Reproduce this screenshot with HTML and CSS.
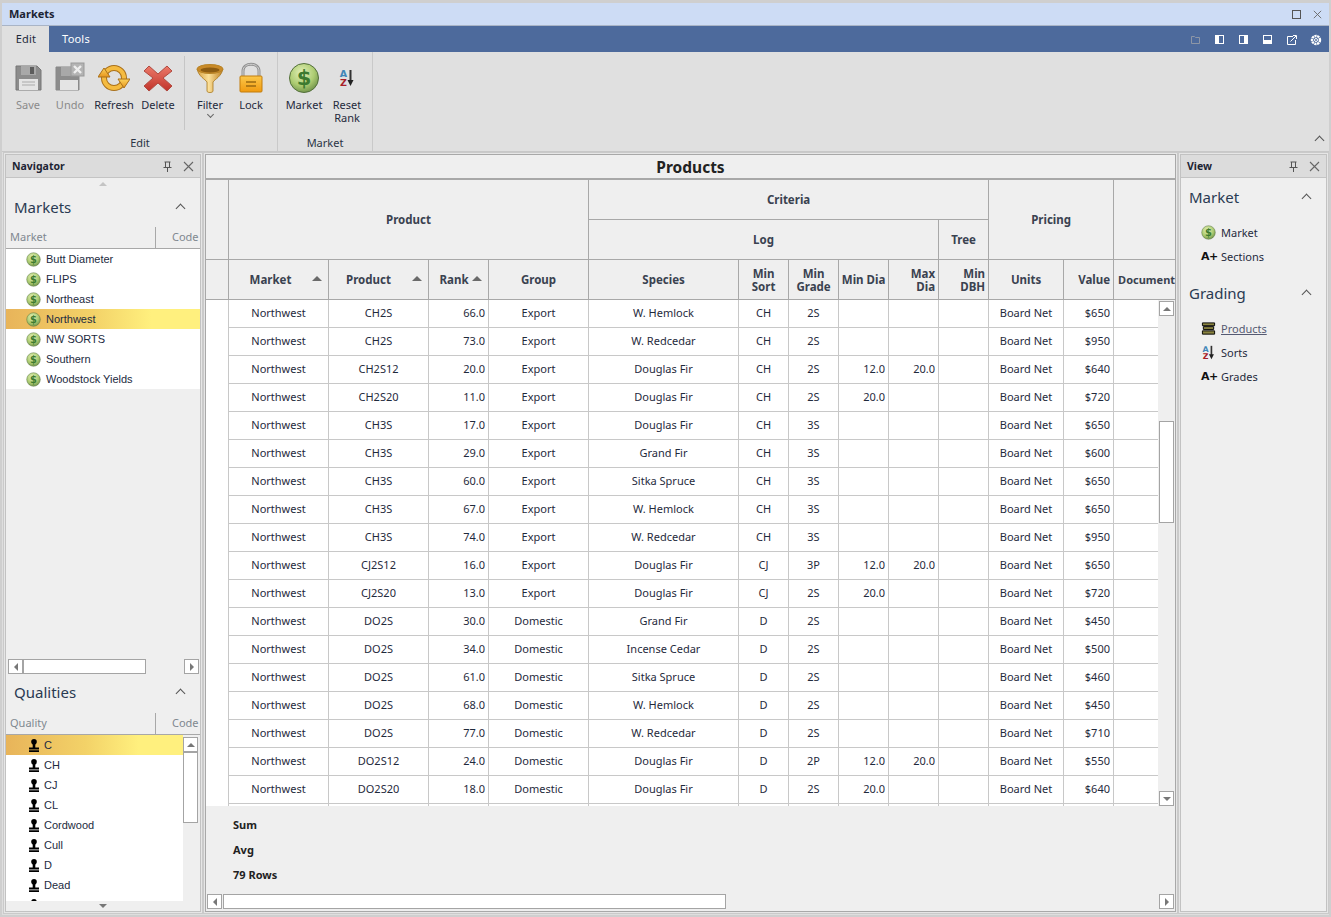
FILE: index.html
```html
<!DOCTYPE html>
<html>
<head>
  <title>Markets</title>
  <meta charset="UTF-8">
  <link rel="stylesheet" href="styles.css">
</head>
<body>
  <svg class="defs" width="0" height="0">
    <defs>
      <radialGradient id="coinFill" cx="42%" cy="32%" r="72%">
        <stop offset="0" stop-color="#e2f0b8"/><stop offset="0.6" stop-color="#adcc72"/><stop offset="1" stop-color="#6d9048"/>
      </radialGradient>
      <linearGradient id="funnelFill" x1="0" x2="1" y1="0" y2="0">
        <stop offset="0" stop-color="#d8a040"/><stop offset="0.45" stop-color="#fbe09a"/><stop offset="1" stop-color="#c07f20"/>
      </linearGradient>
      <linearGradient id="lockFill" x1="0" x2="0" y1="0" y2="1">
        <stop offset="0" stop-color="#fcc84a"/><stop offset="1" stop-color="#f09a10"/>
      </linearGradient>
      <linearGradient id="arrowFill" x1="0" x2="0" y1="0" y2="1">
        <stop offset="0" stop-color="#fbd35c"/><stop offset="1" stop-color="#e8951c"/>
      </linearGradient>
      <linearGradient id="redFill" x1="0" x2="0" y1="0" y2="1">
        <stop offset="0" stop-color="#ec7a6a"/><stop offset="1" stop-color="#c0332a"/>
      </linearGradient>
      <symbol id="coin" viewBox="0 0 32 32">
        <circle cx="16" cy="16" r="14.5" fill="url(#coinFill)" stroke="#54703c" stroke-width="1"/>
        <text x="16" y="23" text-anchor="middle" class="coin-text">$</text>
      </symbol>
      <symbol id="floppy" viewBox="0 0 32 32">
        <path d="M4 4h21l4 4v20H4z" fill="#8c8c8c" stroke="#777" stroke-linejoin="round"/>
        <rect x="9" y="4" width="15" height="9" fill="#a8a8a8"/>
        <rect x="18" y="5" width="4" height="7" fill="#5c5c5c"/>
        <rect x="7" y="17" width="19" height="11" fill="#e4e4e4"/>
        <path d="M10 20h13M10 23h13" stroke="#aaa"/>
      </symbol>
      <symbol id="floppyx" viewBox="0 0 32 32">
        <path d="M2 5h23v23H2z" fill="#8c8c8c" stroke="#888"/>
        <rect x="7" y="5" width="11" height="9" fill="#a8a8a8"/>
        <rect x="6" y="18" width="18" height="10" fill="#e4e4e4"/>
        <rect x="17" y="1" width="13" height="13" fill="#b4b4b4" stroke="#999"/>
        <path d="M20 4l7 7M27 4l-7 7" stroke="#eee" stroke-width="2.4"/>
      </symbol>
      <symbol id="refresh" viewBox="0 0 32 32">
        <circle cx="16" cy="16" r="10" fill="none" stroke="#a9701a" stroke-width="6"/>
        <circle cx="16" cy="16" r="10" fill="none" stroke="#f5bb40" stroke-width="4"/>
        <path d="M0 15l6-9 6 9z" fill="url(#arrowFill)" stroke="#a9701a" stroke-linejoin="round"/>
        <path d="M20 17h12l-6 9z" fill="url(#arrowFill)" stroke="#a9701a" stroke-linejoin="round"/>
      </symbol>
      <symbol id="delete" viewBox="0 0 32 32">
        <path d="M7 4l9 8 9-8 5 5-9 7 9 8-5 5-9-8-9 8-5-5 9-8-9-7z" fill="url(#redFill)" stroke="#b04a40" stroke-linejoin="round"/>
      </symbol>
      <symbol id="funnel" viewBox="0 0 32 32">
        <path d="M3 7c2 8 8 10 10 13v9c0 2 6 2 6 0v-9c2-3 8-5 10-13z" fill="url(#funnelFill)" stroke="#a87820" stroke-width="0.8"/>
        <ellipse cx="16" cy="7" rx="13" ry="4.5" fill="#c98a28" stroke="#b88428"/>
        <ellipse cx="16" cy="8" rx="9.5" ry="2.6" fill="#8d5c12"/>
      </symbol>
      <symbol id="lock" viewBox="0 0 32 32">
        <path d="M8 15V9c0-9 16-9 16 0v6" fill="none" stroke="#8f8f8f" stroke-width="3"/>
        <path d="M8 15V9c0-9 16-9 16 0v6" fill="none" stroke="#d4d4d4" stroke-width="1"/>
        <rect x="5" y="14" width="22" height="16" rx="1" fill="url(#lockFill)" stroke="#c27c0c"/>
        <path d="M11 20h10M11 24h10" stroke="#9a6a10" stroke-width="1.6"/>
      </symbol>
      <symbol id="sortaz" viewBox="0 0 16 18">
        <text x="4.5" y="8" text-anchor="middle" class="az az-a">A</text>
        <text x="4.5" y="17" text-anchor="middle" class="az az-z">Z</text>
        <path d="M11.5 1v11" stroke="#333" stroke-width="2"/>
        <path d="M8.5 11h6l-3 6z" fill="#222"/>
      </symbol>
      <symbol id="stamp" viewBox="0 0 12 13">
        <circle cx="6" cy="2.800" r="2.800" fill="#000"/>
        <path d="M4.700 4h2.600v5H4.700z" fill="#000"/>
        <path d="M1 8.500h10v2H1zM1 11.300h10V13H1z" fill="#000"/>
      </symbol>
      <symbol id="stack" viewBox="0 0 16 14">
        <path d="M1.500 1h13v3h-13zM2.500 5h11v3h-11zM1.500 9.500h13v3.500h-13z" fill="#8a8440" stroke="#000"/>
      </symbol>
      <symbol id="pin" viewBox="0 0 11 11">
        <path d="M2.500 1h6M3.500 1v5M7.500 1v5M1.500 6.500h8M5.500 7v4" fill="none" stroke="#555"/>
      </symbol>
      <symbol id="close" viewBox="0 0 11 11">
        <path d="M1 1l9 9M10 1l-9 9" fill="none" stroke="#666" stroke-width="1.100"/>
      </symbol>
    </defs>
  </svg>

  <div class="window">
    <div class="titlebar">
      <span class="titlebar-text">Markets</span>
      <span class="win-max"></span>
      <svg class="win-close"><use href="#close"/></svg>
    </div>

    <div class="tabbar">
      <div class="tab tab-active">Edit</div>
      <div class="tab">Tools</div>
      <div class="tab-icons">
        <svg class="ti ti-folder" viewBox="0 0 9 9"><path d="M0.500 1.500h3l1 1h4v6h-8z" fill="none" stroke="#8d96a6"/></svg>
        <span class="ti-panel ti-left"></span>
        <span class="ti-panel ti-right"></span>
        <span class="ti-panel ti-bottom"></span>
        <svg class="ti ti-pop" viewBox="0 0 10 10"><path d="M6 1.500H0.500v8h8V5" fill="none" stroke="#fff"/><path d="M3.500 6.500L9 1M6 0.500h3.500V4" fill="none" stroke="#fff"/></svg>
        <svg class="ti ti-gear" viewBox="0 0 12 12"><circle cx="6" cy="6" r="4" fill="none" stroke="#fff" stroke-width="2.400" stroke-dasharray="2.200 0.600"/><circle cx="6" cy="6" r="1.500" fill="none" stroke="#fff"/></svg>
      </div>
    </div>

    <div class="ribbon">
      <div class="rb-group rb-group-edit">
        <div class="rb-items">
          <div class="rb-btn rb-w42 is-off"><svg class="rb-ico"><use href="#floppy"/></svg><span>Save</span></div>
          <div class="rb-btn rb-w42 is-off"><svg class="rb-ico"><use href="#floppyx"/></svg><span>Undo</span></div>
          <div class="rb-btn rb-w46"><svg class="rb-ico"><use href="#refresh"/></svg><span>Refresh</span></div>
          <div class="rb-btn rb-w42"><svg class="rb-ico"><use href="#delete"/></svg><span>Delete</span></div>
          <div class="rb-sep"></div>
          <div class="rb-btn rb-w44"><svg class="rb-ico"><use href="#funnel"/></svg><span>Filter</span><i class="rb-chev"></i></div>
          <div class="rb-btn rb-w38"><svg class="rb-ico"><use href="#lock"/></svg><span>Lock</span></div>
        </div>
        <div class="rb-label">Edit</div>
      </div>
      <div class="rb-group rb-group-market">
        <div class="rb-items">
          <div class="rb-btn rb-w42"><svg class="rb-ico"><use href="#coin"/></svg><span>Market</span></div>
          <div class="rb-btn rb-w44"><svg class="rb-ico rb-ico-az"><use href="#sortaz"/></svg><span>Reset<br>Rank</span></div>
        </div>
        <div class="rb-label">Market</div>
      </div>
      <i class="chev rb-collapse"></i>
    </div>

    <div class="main">
      <div class="pane pane-nav">
        <div class="pane-in">
          <div class="pane-head"><b>Navigator</b><svg class="ph-pin"><use href="#pin"/></svg><svg class="ph-close"><use href="#close"/></svg></div>
          <div class="nav-up"><i class="tri tri-up tri-light"></i></div>
          <div class="sec-title sec-markets"><span>Markets</span><i class="chev"></i></div>
          <div class="col-head"><span class="ch-name">Market</span><span class="ch-code">Code</span></div>
          <ul class="list">
            <li><svg class="li-ico"><use href="#coin"/></svg>Butt Diameter</li>
            <li><svg class="li-ico"><use href="#coin"/></svg>FLIPS</li>
            <li><svg class="li-ico"><use href="#coin"/></svg>Northeast</li>
            <li class="sel"><svg class="li-ico"><use href="#coin"/></svg>Northwest</li>
            <li><svg class="li-ico"><use href="#coin"/></svg>NW SORTS</li>
            <li><svg class="li-ico"><use href="#coin"/></svg>Southern</li>
            <li><svg class="li-ico"><use href="#coin"/></svg>Woodstock Yields</li>
          </ul>
          <div class="nav-fill"></div>
          <div class="hscroll hscroll-nav">
            <div class="sb-btn"><i class="tri tri-left"></i></div>
            <div class="sb-thumb sb-thumb-nav"></div>
            <div class="sb-gap"></div>
            <div class="sb-btn"><i class="tri tri-right"></i></div>
          </div>
          <div class="sec-title sec-qual"><span>Qualities</span><i class="chev"></i></div>
          <div class="col-head"><span class="ch-name">Quality</span><span class="ch-code">Code</span></div>
          <div class="qual-body">
            <ul class="list list-qual">
              <li class="sel"><svg class="li-stamp"><use href="#stamp"/></svg>C</li>
              <li><svg class="li-stamp"><use href="#stamp"/></svg>CH</li>
              <li><svg class="li-stamp"><use href="#stamp"/></svg>CJ</li>
              <li><svg class="li-stamp"><use href="#stamp"/></svg>CL</li>
              <li><svg class="li-stamp"><use href="#stamp"/></svg>Cordwood</li>
              <li><svg class="li-stamp"><use href="#stamp"/></svg>Cull</li>
              <li><svg class="li-stamp"><use href="#stamp"/></svg>D</li>
              <li><svg class="li-stamp"><use href="#stamp"/></svg>Dead</li>
              <li><svg class="li-stamp"><use href="#stamp"/></svg>D</li>
            </ul>
            <div class="vscroll vscroll-qual">
              <div class="sb-btn"><i class="tri tri-up"></i></div>
              <div class="sb-thumb sb-thumb-qual"></div>
            </div>
          </div>
          <div class="nav-down"><i class="tri tri-down"></i></div>
        </div>
      </div>

      <div class="pane pane-center">
        <div class="pane-in">
          <div class="grid-title">Products</div>
          <div class="grid-head">
            <table class="grid">
              <colgroup><col class="c-rh"><col class="c-100"><col class="c-100"><col class="c-60"><col class="c-100"><col class="c-150"><col class="c-50"><col class="c-50"><col class="c-50"><col class="c-50"><col class="c-50"><col class="c-75"><col class="c-50"><col class="c-62"></colgroup>
              <tr>
                <th rowspan="2"></th>
                <th colspan="4" rowspan="2">Product</th>
                <th colspan="6">Criteria</th>
                <th colspan="2" rowspan="2">Pricing</th>
                <th rowspan="2" class="no-right"></th>
              </tr>
              <tr>
                <th colspan="5">Log</th>
                <th>Tree</th>
              </tr>
              <tr>
                <th></th>
                <th class="sorted pad-16">Market</th>
                <th class="sorted pad-20">Product</th>
                <th class="sorted pad-9">Rank</th>
                <th>Group</th>
                <th>Species</th>
                <th>Min<br>Sort</th>
                <th>Min<br>Grade</th>
                <th>Min Dia</th>
                <th class="right">Max<br>Dia</th>
                <th class="right">Min<br>DBH</th>
                <th>Units</th>
                <th class="right">Value</th>
                <th class="no-right doc">Document</th>
              </tr>
            </table>
          </div>
          <div class="grid-mid">
            <div class="grid-body">
              <table class="grid">
                <colgroup><col class="c-rh"><col class="c-100"><col class="c-100"><col class="c-60"><col class="c-100"><col class="c-150"><col class="c-50"><col class="c-50"><col class="c-50"><col class="c-50"><col class="c-50"><col class="c-75"><col class="c-50"><col class="c-62"></colgroup>
                <tr><td></td><td>Northwest</td><td>CH2S</td><td class="num">66.0</td><td>Export</td><td>W. Hemlock</td><td>CH</td><td>2S</td><td></td><td></td><td></td><td>Board Net</td><td class="num">$650</td><td></td></tr>
                <tr><td></td><td>Northwest</td><td>CH2S</td><td class="num">73.0</td><td>Export</td><td>W. Redcedar</td><td>CH</td><td>2S</td><td></td><td></td><td></td><td>Board Net</td><td class="num">$950</td><td></td></tr>
                <tr><td></td><td>Northwest</td><td>CH2S12</td><td class="num">20.0</td><td>Export</td><td>Douglas Fir</td><td>CH</td><td>2S</td><td class="num">12.0</td><td class="num">20.0</td><td></td><td>Board Net</td><td class="num">$640</td><td></td></tr>
                <tr><td></td><td>Northwest</td><td>CH2S20</td><td class="num">11.0</td><td>Export</td><td>Douglas Fir</td><td>CH</td><td>2S</td><td class="num">20.0</td><td></td><td></td><td>Board Net</td><td class="num">$720</td><td></td></tr>
                <tr><td></td><td>Northwest</td><td>CH3S</td><td class="num">17.0</td><td>Export</td><td>Douglas Fir</td><td>CH</td><td>3S</td><td></td><td></td><td></td><td>Board Net</td><td class="num">$650</td><td></td></tr>
                <tr><td></td><td>Northwest</td><td>CH3S</td><td class="num">29.0</td><td>Export</td><td>Grand Fir</td><td>CH</td><td>3S</td><td></td><td></td><td></td><td>Board Net</td><td class="num">$600</td><td></td></tr>
                <tr><td></td><td>Northwest</td><td>CH3S</td><td class="num">60.0</td><td>Export</td><td>Sitka Spruce</td><td>CH</td><td>3S</td><td></td><td></td><td></td><td>Board Net</td><td class="num">$650</td><td></td></tr>
                <tr><td></td><td>Northwest</td><td>CH3S</td><td class="num">67.0</td><td>Export</td><td>W. Hemlock</td><td>CH</td><td>3S</td><td></td><td></td><td></td><td>Board Net</td><td class="num">$650</td><td></td></tr>
                <tr><td></td><td>Northwest</td><td>CH3S</td><td class="num">74.0</td><td>Export</td><td>W. Redcedar</td><td>CH</td><td>3S</td><td></td><td></td><td></td><td>Board Net</td><td class="num">$950</td><td></td></tr>
                <tr><td></td><td>Northwest</td><td>CJ2S12</td><td class="num">16.0</td><td>Export</td><td>Douglas Fir</td><td>CJ</td><td>3P</td><td class="num">12.0</td><td class="num">20.0</td><td></td><td>Board Net</td><td class="num">$650</td><td></td></tr>
                <tr><td></td><td>Northwest</td><td>CJ2S20</td><td class="num">13.0</td><td>Export</td><td>Douglas Fir</td><td>CJ</td><td>2S</td><td class="num">20.0</td><td></td><td></td><td>Board Net</td><td class="num">$720</td><td></td></tr>
                <tr><td></td><td>Northwest</td><td>DO2S</td><td class="num">30.0</td><td>Domestic</td><td>Grand Fir</td><td>D</td><td>2S</td><td></td><td></td><td></td><td>Board Net</td><td class="num">$450</td><td></td></tr>
                <tr><td></td><td>Northwest</td><td>DO2S</td><td class="num">34.0</td><td>Domestic</td><td>Incense Cedar</td><td>D</td><td>2S</td><td></td><td></td><td></td><td>Board Net</td><td class="num">$500</td><td></td></tr>
                <tr><td></td><td>Northwest</td><td>DO2S</td><td class="num">61.0</td><td>Domestic</td><td>Sitka Spruce</td><td>D</td><td>2S</td><td></td><td></td><td></td><td>Board Net</td><td class="num">$460</td><td></td></tr>
                <tr><td></td><td>Northwest</td><td>DO2S</td><td class="num">68.0</td><td>Domestic</td><td>W. Hemlock</td><td>D</td><td>2S</td><td></td><td></td><td></td><td>Board Net</td><td class="num">$450</td><td></td></tr>
                <tr><td></td><td>Northwest</td><td>DO2S</td><td class="num">77.0</td><td>Domestic</td><td>W. Redcedar</td><td>D</td><td>2S</td><td></td><td></td><td></td><td>Board Net</td><td class="num">$710</td><td></td></tr>
                <tr><td></td><td>Northwest</td><td>DO2S12</td><td class="num">24.0</td><td>Domestic</td><td>Douglas Fir</td><td>D</td><td>2P</td><td class="num">12.0</td><td class="num">20.0</td><td></td><td>Board Net</td><td class="num">$550</td><td></td></tr>
                <tr><td></td><td>Northwest</td><td>DO2S20</td><td class="num">18.0</td><td>Domestic</td><td>Douglas Fir</td><td>D</td><td>2S</td><td class="num">20.0</td><td></td><td></td><td>Board Net</td><td class="num">$640</td><td></td></tr>
                <tr><td></td><td></td><td></td><td></td><td></td><td></td><td></td><td></td><td></td><td></td><td></td><td></td><td></td><td></td></tr>
              </table>
            </div>
            <div class="vscroll vscroll-grid">
              <div class="sb-btn"><i class="tri tri-up"></i></div>
              <div class="sb-gap sb-gap-top"></div>
              <div class="sb-thumb sb-thumb-grid"></div>
              <div class="sb-gap"></div>
              <div class="sb-btn"><i class="tri tri-down"></i></div>
            </div>
          </div>
          <div class="grid-foot">
            <div>Sum</div>
            <div>Avg</div>
            <div>79 Rows</div>
          </div>
          <div class="hscroll hscroll-grid">
            <div class="sb-btn"><i class="tri tri-left"></i></div>
            <div class="sb-thumb sb-thumb-hgrid"></div>
            <div class="sb-gap"></div>
            <div class="sb-btn"><i class="tri tri-right"></i></div>
          </div>
        </div>
      </div>

      <div class="pane pane-view">
        <div class="pane-in">
          <div class="pane-head"><b>View</b><svg class="ph-pin"><use href="#pin"/></svg><svg class="ph-close"><use href="#close"/></svg></div>
          <div class="sec-title view-title"><span>Market</span><i class="chev"></i></div>
          <div class="view-item"><svg class="vi-ico"><use href="#coin"/></svg>Market</div>
          <div class="view-item"><span class="aplus">A+</span>Sections</div>
          <div class="sec-title view-title view-title-2"><span>Grading</span><i class="chev"></i></div>
          <div class="view-item"><svg class="vi-ico vi-stack"><use href="#stack"/></svg><u>Products</u></div>
          <div class="view-item"><svg class="vi-ico"><use href="#sortaz"/></svg>Sorts</div>
          <div class="view-item"><span class="aplus">A+</span>Grades</div>
        </div>
      </div>
    </div>
  </div>
</body>
</html>
```

FILE: styles.css
```css
* {
  margin: 0;
  padding: 0;
  box-sizing: border-box;
}

html, body {
  height: 100%;
  overflow: hidden;
}

body {
  font-family: "Noto Sans", "Liberation Sans", sans-serif;
  font-size: 11px;
  color: #1f2a3c;
  background: #dedede;
}

.defs {
  position: absolute;
}

.coin-text {
  font-family: "DejaVu Sans", sans-serif;
  font-size: 21px;
  font-weight: 700;
  fill: #3d7a30;
}

.az {
  font-family: "DejaVu Sans", sans-serif;
  font-size: 9.5px;
  font-weight: 700;
}

.az-a { fill: #3f86b8; }
.az-z { fill: #a82028; }

.window {
  width: 1331px;
  height: 917px;
  display: flex;
  flex-direction: column;
  border: solid #cfcfcf;
  border-width: 3px 2px 2px 2px;
}

/* title bar */
.titlebar {
  height: 23px;
  flex: none;
  display: flex;
  align-items: center;
  background: #cddcf5;
  border-bottom: 1px solid #a9b4c6;
  padding-left: 7px;
}

.titlebar-text {
  flex: 1;
  font-weight: 700;
  font-size: 11px;
  line-height: 20px;
  color: #1c2433;
}

.win-max {
  width: 9px;
  height: 9px;
  border: 1px solid #555;
  margin-right: 12px;
}

.win-close {
  width: 9px;
  height: 9px;
  margin-right: 7px;
}

/* tabs */
.tabbar {
  height: 26px;
  flex: none;
  display: flex;
  background: #4d6a9c;
}

.tab {
  width: 54px;
  line-height: 26px;
  text-align: center;
  color: #fff;
  font-size: 11px;
  letter-spacing: 0.2px;
}

.tab-active {
  width: 47px;
  padding-left: 1px;
  background: #e0e0e0;
  color: #1f2a3c;
}

.tab-icons {
  margin-left: auto;
  display: flex;
  align-items: center;
  padding-right: 7px;
  padding-top: 1px;
}

.ti {
  display: block;
  flex: none;
}

.ti-folder {
  width: 9px;
  height: 9px;
  margin-right: 15px;
}

.ti-panel {
  width: 9px;
  height: 9px;
  margin-right: 15px;
  border: 1px solid #fff;
}

.ti-left { background: linear-gradient(90deg, #fff 40%, #4d6a9c 40%); }
.ti-right { background: linear-gradient(90deg, #4d6a9c 60%, #fff 60%); }
.ti-bottom { background: linear-gradient(#4d6a9c 60%, #fff 60%); }

.ti-pop {
  width: 10px;
  height: 10px;
  margin-right: 13px;
}

.ti-gear {
  width: 12px;
  height: 12px;
}

/* ribbon */
.ribbon {
  height: 100px;
  flex: none;
  position: relative;
  display: flex;
  background: #e0e0e0;
  border-bottom: 1px solid #c8c8c8;
}

.rb-group {
  display: flex;
  flex-direction: column;
  border-right: 1px solid #c9c9c9;
}

.rb-group-edit {
  width: 276px;
  padding-left: 5px;
}

.rb-group-market {
  width: 95px;
  padding-left: 5px;
}

.rb-items {
  flex: 1;
  display: flex;
}

.rb-label {
  height: 17px;
  text-align: center;
  line-height: 17px;
  font-size: 11px;
  color: #2a3444;
}

.rb-group-edit .rb-label {
  padding-right: 4px;
}

.rb-group-market .rb-label {
  padding-right: 5px;
}

.rb-btn {
  display: flex;
  flex-direction: column;
  align-items: center;
  padding-top: 10px;
  line-height: 13px;
  text-align: center;
  font-size: 11px;
  color: #1f2a3c;
}

.rb-btn.is-off {
  color: #8a8a8a;
}

.rb-w38 { width: 38px; }
.rb-w42 { width: 42px; }
.rb-w44 { width: 44px; }
.rb-w46 { width: 46px; }

.rb-ico {
  width: 32px;
  height: 32px;
  margin-bottom: 4px;
  flex: none;
}

.rb-ico-az {
  padding: 7px;
}

.rb-sep {
  width: 1px;
  height: 74px;
  margin: 4px 3px 0 5px;
  background: #c6c6c6;
}

.rb-chev {
  width: 5px;
  height: 5px;
  margin-top: 1px;
  border: solid #666;
  border-width: 0 1px 1px 0;
  transform: rotate(45deg);
}

.chev {
  width: 7px;
  height: 7px;
  border: solid #555;
  border-width: 1px 0 0 1px;
  transform: rotate(45deg);
  flex: none;
}

.rb-collapse {
  position: absolute;
  right: 6px;
  bottom: 7px;
}

/* panes */
.main {
  flex: 1;
  min-height: 0;
  display: flex;
  padding: 0 0 1px 1px;
}

.pane {
  border: 1px solid #cacaca;
  padding: 1px;
  background: #e6e6e6;
  display: flex;
}

.pane-in {
  flex: 1;
  min-width: 0;
  display: flex;
  flex-direction: column;
  border: 1px solid #c2c2c2;
  background: #efefef;
}

.pane-nav { width: 200px; }
.pane-center { width: 975px; }
.pane-view { width: 151px; }

.pane-center .pane-in {
  border-color: #a8a8a8;
}

.pane-head {
  height: 23px;
  flex: none;
  display: flex;
  align-items: center;
  padding-left: 6px;
  background: #dcdcdc;
  border-bottom: 1px solid #c4c4c4;
}

.pane-head b {
  flex: 1;
  color: #1c2433;
  font-size: 10.5px;
  line-height: 20px;
}

.ph-pin {
  width: 11px;
  height: 11px;
  margin-right: 10px;
}

.ph-close {
  width: 11px;
  height: 11px;
  margin-right: 6px;
}

.tri {
  display: block;
  width: 0;
  height: 0;
  border-style: solid;
  border-color: transparent;
}

.tri-up { border-width: 0 4px 4px; border-bottom-color: #777; }
.tri-down { border-width: 4px 4px 0; border-top-color: #777; }
.tri-left { border-width: 4px 4px 4px 0; border-right-color: #777; }
.tri-right { border-width: 4px 0 4px 4px; border-left-color: #777; }
.tri-light { border-bottom-color: #c4c4c4; }

.nav-up {
  height: 12px;
  flex: none;
  display: flex;
  justify-content: center;
  align-items: center;
}

.sec-title {
  flex: none;
  display: flex;
  align-items: center;
  padding: 0 16px 0 8px;
  font-size: 15px;
  color: #2a3a52;
}

.sec-title span {
  flex: 1;
  line-height: 20px;
  margin-bottom: 3px;
}

.sec-markets { height: 37px; }
.sec-qual { height: 39px; }

.col-head {
  height: 22px;
  flex: none;
  display: flex;
  align-items: stretch;
  line-height: 20px;
  color: #808890;
  border-bottom: 1px solid #a8a8a8;
  overflow: hidden;
}

.ch-name {
  width: 150px;
  flex: none;
  padding-left: 4px;
  border-right: 1px solid #a8a8a8;
}

.ch-code {
  padding-left: 16px;
}

.list {
  list-style: none;
  background: #fff;
  flex: none;
}

.list li {
  height: 20px;
  display: flex;
  align-items: center;
  font-family: "Liberation Sans", sans-serif;
  font-size: 11px;
  color: #1c2a40;
}

.list .sel {
  background: linear-gradient(90deg, #e8b45a 0%, #f3d268 45%, #fff07e 75%, #fff07e 100%);
}

.li-ico {
  width: 15px;
  height: 15px;
  margin: 0 5px 0 20px;
  flex: none;
}

.li-stamp {
  width: 12px;
  height: 13px;
  margin: 0 4px 0 22px;
  flex: none;
}

.nav-fill {
  flex: 1;
}

.hscroll {
  height: 15px;
  flex: none;
  display: flex;
}

.hscroll-nav {
  padding: 0 1px 0 2px;
}

.sb-btn {
  width: 15px;
  height: 15px;
  flex: none;
  display: flex;
  align-items: center;
  justify-content: center;
  background: #fff;
  border: 1px solid #a4a4a4;
}

.sb-thumb {
  background: #fff;
  border: 1px solid #a4a4a4;
  flex: none;
}

.sb-gap {
  flex: 1;
}

.sb-thumb-nav {
  width: 123px;
}

.qual-body {
  height: 166px;
  flex: none;
  display: flex;
  overflow: hidden;
}

.list-qual {
  width: 177px;
  height: 166px;
  overflow: hidden;
}

.vscroll {
  flex: none;
  display: flex;
  flex-direction: column;
}

.vscroll-qual {
  width: 16px;
  padding-top: 2px;
}

.sb-thumb-qual {
  width: 15px;
  height: 71px;
}

.nav-down {
  height: 10px;
  flex: none;
  display: flex;
  align-items: center;
  justify-content: center;
}

/* product grid */
.grid-title {
  height: 25px;
  flex: none;
  line-height: 24px;
  text-align: center;
  font-size: 15.5px;
  font-weight: 700;
  color: #222;
  border-bottom: 2px solid #a8a8a8;
}

.grid-head {
  height: 120px;
  flex: none;
  overflow: hidden;
  background: #efefef;
}

.grid {
  width: 963px;
  table-layout: fixed;
  border-collapse: separate;
  border-spacing: 0;
}

.c-rh { width: 23px; }
.c-100 { width: 100px; }
.c-60 { width: 60px; }
.c-150 { width: 150px; }
.c-50 { width: 50px; }
.c-75 { width: 75px; }
.c-62 { width: 62px; }

.grid th {
  height: 40px;
  position: relative;
  border-right: 1px solid #a8a8a8;
  border-bottom: 1px solid #a8a8a8;
  font-size: 11.5px;
  font-weight: 700;
  line-height: 13px;
  color: #3a4250;
  white-space: nowrap;
}

.grid th.no-right { border-right: none; }
.grid th.right { text-align: right; padding-right: 3px; }
.grid th.doc { text-align: left; padding-left: 4px; font-size: 11px; }
.grid th.pad-16 { padding-right: 16px; }
.grid th.pad-20 { padding-right: 20px; }
.grid th.pad-9 { padding-right: 9px; }

.sorted::after {
  content: "";
  position: absolute;
  right: 6px;
  top: 16px;
  border: solid transparent;
  border-width: 0 5px 5px;
  border-bottom-color: #6a6a6a;
}

.grid-mid {
  height: 506px;
  flex: none;
  display: flex;
}

.grid-body {
  width: 952px;
  flex: none;
  overflow: hidden;
  background: #fff;
}

.grid td {
  height: 28px;
  padding-bottom: 2px;
  text-align: center;
  border-right: 1px solid #c8c8c8;
  border-bottom: 1px solid #c8c8c8;
  font-size: 11px;
  color: #1f2a3c;
  white-space: nowrap;
}

.grid td:first-child { border-bottom: none; }
.grid td.num { text-align: right; padding-right: 3px; }

.vscroll-grid {
  width: 17px;
  padding: 1px 0 0 1px;
}

.sb-gap-top {
  flex: none;
  height: 105px;
}

.sb-thumb-grid {
  width: 15px;
  height: 102px;
}

.grid-foot {
  height: 88px;
  flex: none;
  padding: 6px 0 0 27px;
  font-weight: 700;
  color: #222;
}

.grid-foot div {
  height: 25px;
  line-height: 25px;
}

.hscroll-grid {
  padding: 0 1px;
}

.sb-thumb-hgrid {
  width: 503px;
  margin-left: 1px;
}

/* view pane */
.view-title {
  height: 40px;
  padding-right: 16px;
}

.view-title-2 {
  margin-top: 6px;
}

.view-item {
  height: 24px;
  flex: none;
  display: flex;
  align-items: center;
  padding-left: 20px;
  font-size: 11px;
  color: #1f2a3c;
}

.view-title + .view-item {
  margin-top: 2px;
}

.view-item u {
  color: #555a72;
}

.vi-ico {
  width: 15px;
  height: 15px;
  margin-right: 5px;
  flex: none;
}

.aplus {
  width: 15px;
  margin-right: 5px;
  flex: none;
  font-family: "DejaVu Sans", sans-serif;
  font-weight: 700;
  font-size: 11px;
  letter-spacing: -0.5px;
  color: #111;
}
```
